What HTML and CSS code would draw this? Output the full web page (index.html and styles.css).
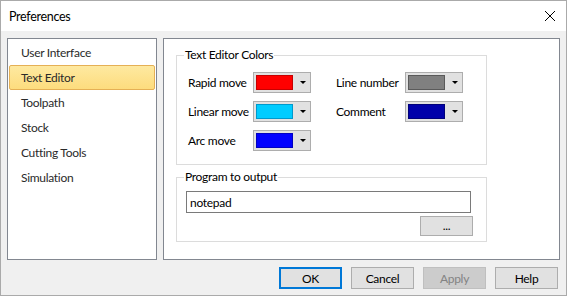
FILE: index.html
```html
<!DOCTYPE html>
<html lang="en">
<head>
    <meta charset="UTF-8">
    <title>Preferences</title>
    <link rel="stylesheet" href="styles.css">
</head>
<body>
    <div class="window">
        <!-- Title bar -->
        <div class="title-bar">
            <span class="title">Preferences</span>
            <svg class="close" width="12" height="12" viewBox="0 0 12 12">
                <path d="M1 1 L11 11 M11 1 L1 11" stroke="#000" stroke-width="1" fill="none"/>
            </svg>
        </div>
        <!-- Dialog body -->
        <div class="dialog-body">
            <div class="main-row">
                <ul class="nav-list">
                    <li>User Interface</li>
                    <li class="selected">Text Editor</li>
                    <li>Toolpath</li>
                    <li>Stock</li>
                    <li>Cutting Tools</li>
                    <li>Simulation</li>
                </ul>
                <div class="page">
                    <fieldset class="group colors-group">
                        <legend>Text Editor Colors</legend>
                        <div class="color-grid">
                            <span class="label">Rapid move</span>
                            <div class="color-btn"><span class="swatch red"></span><span class="arrow"></span></div>
                            <span class="label right">Line number</span>
                            <div class="color-btn"><span class="swatch gray"></span><span class="arrow"></span></div>
                            <span class="label">Linear move</span>
                            <div class="color-btn"><span class="swatch cyan"></span><span class="arrow"></span></div>
                            <span class="label right">Comment</span>
                            <div class="color-btn"><span class="swatch navy"></span><span class="arrow"></span></div>
                            <span class="label">Arc move</span>
                            <div class="color-btn"><span class="swatch blue"></span><span class="arrow"></span></div>
                        </div>
                    </fieldset>
                    <fieldset class="group output-group">
                        <legend>Program to output</legend>
                        <input type="text" class="text-input" value="notepad">
                        <div class="browse-row">
                            <button class="btn browse">...</button>
                        </div>
                    </fieldset>
                </div>
            </div>
            <div class="button-row">
                <button class="btn default">OK</button>
                <button class="btn">Cancel</button>
                <button class="btn" disabled>Apply</button>
                <button class="btn">Help</button>
            </div>
        </div>
    </div>
</body>
</html>
```
FILE: styles.css
```css
* {
    margin: 0;
    padding: 0;
    box-sizing: border-box;
}
body, html {
    height: 100%;
    width: 100%;
}
body {
    font-family: Lato, "Liberation Sans", sans-serif;
    font-size: 12px;
    letter-spacing: -0.3px;
    color: #000;
    background: #fff;
}
.window {
    width: 567px;
    height: 296px;
    border: 1px solid #aaaaaa;
    background: #f0f0f0;
    display: flex;
    flex-direction: column;
}
/* Title bar */
.title-bar {
    height: 30px;
    background: #fff;
    display: flex;
    align-items: center;
    justify-content: space-between;
    padding: 0 10px 0 8px;
}
.title {
    font-size: 12.5px;
}
.close {
    display: block;
}
/* Body */
.dialog-body {
    flex: 1;
    padding: 7px 6px 6px 6px;
    display: flex;
    flex-direction: column;
}
.main-row {
    display: flex;
    gap: 6px;
    height: 222px;
}
.nav-list {
    list-style: none;
    flex: 0 0 150px;
    background: #fff;
    border: 1px solid #828790;
    padding: 1px 1px;
}
.nav-list li {
    height: 25px;
    line-height: 23px;
    padding-left: 11px;
    border: 1px solid transparent;
    border-radius: 2px;
    color: #2a2a2a;
    white-space: nowrap;
}
.nav-list li.selected {
    background: linear-gradient(#fee9a0, #fddc7e);
    border-color: #e5b055;
}
.page {
    flex: 1;
    min-width: 0;
    background: #fff;
    border: 1px solid #828790;
    padding: 8px 72px 0 12px;
    display: flex;
    flex-direction: column;
    gap: 4px;
}
.group {
    border: 1px solid #dcdcdc;
    min-width: 0;
}
.group legend {
    padding: 0 1px;
    line-height: 16px;
    color: #000;
}
.colors-group {
    height: 118px;
    padding: 9px 0 0 11px;
}
.colors-group legend {
    margin-left: -4px;
}
.color-grid {
    display: grid;
    grid-template-columns: 65px 58px 94px 58px;
    row-gap: 8px;
    grid-auto-rows: 21px;
    align-items: center;
}
.label {
    white-space: nowrap;
}
.label.right {
    padding-left: 25px;
}
.color-btn {
    height: 21px;
    background: #e1e1e1;
    border: 1px solid #adadad;
    display: flex;
    align-items: center;
    padding-left: 2px;
}
.swatch {
    width: 37px;
    height: 15px;
    border: 1px solid;
}
.swatch.red { background: #ff0000; border-color: #c80000; }
.swatch.gray { background: #808080; border-color: #5a5a5a; }
.swatch.cyan { background: #00ccff; border-color: #0099cc; }
.swatch.navy { background: #0000aa; border-color: #00007a; }
.swatch.blue { background: #0000ff; border-color: #0000c0; }
.arrow {
    margin-left: 7px;
    width: 0;
    height: 0;
    border-left: 3px solid transparent;
    border-right: 3px solid transparent;
    border-top: 3px solid #000;
}
.output-group {
    height: 73px;
    padding: 6px 15px 0 9px;
}
.output-group legend {
    margin-left: -2px;
}
.text-input {
    display: block;
    width: 100%;
    height: 22px;
    border: 1px solid #7a7a7a;
    padding: 0 3px;
    font-family: inherit;
    font-size: 12px;
    letter-spacing: -0.3px;
    color: #000;
    outline: none;
}
.browse-row {
    display: flex;
    justify-content: flex-end;
    margin-top: 3px;
    margin-right: -2px;
}
/* Buttons */
.btn {
    width: 63px;
    height: 22px;
    background: #e1e1e1;
    border: 1px solid #adadad;
    font-family: inherit;
    font-size: 12px;
    letter-spacing: -0.3px;
    color: #000;
}
.btn.browse {
    width: 53px;
    height: 20px;
    line-height: 14px;
}
.btn.default {
    border: 2px solid #0078d7;
}
.btn:disabled {
    background: #cccccc;
    border-color: #bfbfbf;
    color: #838383;
}
.button-row {
    display: flex;
    justify-content: flex-end;
    gap: 9px;
    margin-top: 7px;
    padding-right: 2px;
}
```
